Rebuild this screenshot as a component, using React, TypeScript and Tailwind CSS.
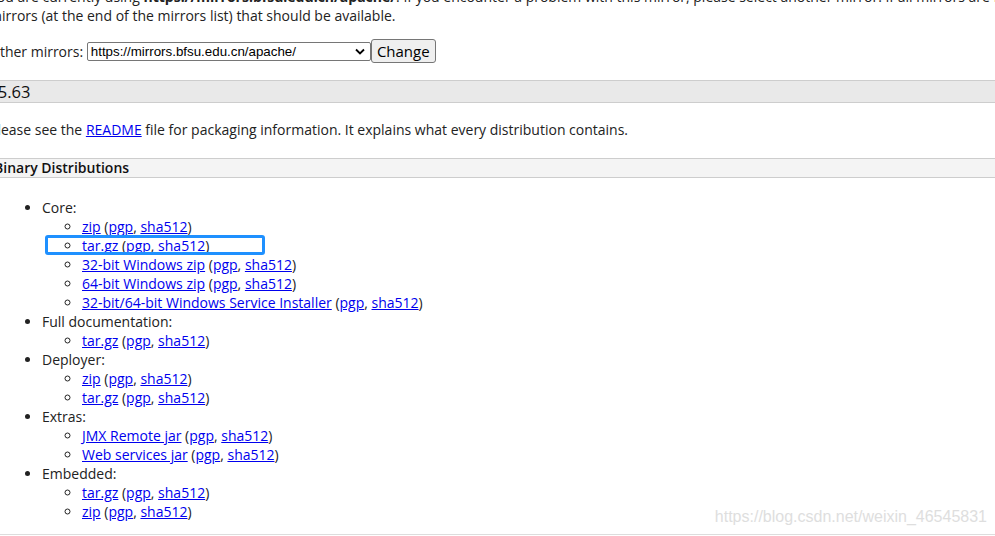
import React from "react";

const L = "text-[#0000ee] underline";

function Item({ name }: { name: string }) {
  return (
    <li>
      <a className={L} href="#">{name}</a> (<a className={L} href="#">pgp</a>, <a className={L} href="#">sha512</a>)
    </li>
  );
}

export default function App() {
  return (
    <div
      className="relative h-[536px] w-[995px] overflow-hidden bg-white text-[14px] leading-[19px] text-[#222]"
      style={{ fontFamily: '"Open Sans", sans-serif' }}
    >
      <div className="-ml-[16px] -mt-[13px] w-[1100px]">
        <div className="pl-[5px]">
          <div className="whitespace-nowrap">
            You are currently using <b>https://mirrors.bfsu.edu.cn/apache/</b>. If you encounter a problem with this mirror, please select another mirror. If all mirrors are failing, there are <i>backup</i>
          </div>
          <div className="whitespace-nowrap">mirrors (at the end of the mirrors list) that should be available.</div>
        </div>

        <div className="mt-[14px] flex h-[24px] items-center pl-[5px]">
          <span className="whitespace-pre">Other mirrors: </span>
          <div
            className="flex h-[19px] w-[284px] items-center justify-between rounded-[2px] border border-[#767676] bg-white pl-[3px] pr-[5px] text-[13.33px] text-black"
            style={{ fontFamily: '"Liberation Sans", Arial, sans-serif' }}
          >
            <span>https://mirrors.bfsu.edu.cn/apache/</span>
            <svg width="10" height="7" viewBox="0 0 10 7" fill="none">
              <path d="M1 1.5 L5 5.5 L9 1.5" stroke="#000" strokeWidth="1.8" />
            </svg>
          </div>
          <div className="flex h-[24px] w-[65px] items-center justify-center rounded-[3px] border border-[#767676] bg-[#efefef] text-[15px] text-black">
            Change
          </div>
        </div>

        <h3 className="mt-[17px] h-[23px] border-y border-[#cdcdcd] bg-[#e9e9e9] pl-[0px] text-[16.5px] font-normal leading-[21px] text-[#111]">
          8.5.63
        </h3>

        <p className="mt-[17px] pl-[5px]">
          Please see the <a className={L} href="#">README</a> file for packaging information. It explains what every distribution contains.
        </p>

        <h4 className="mt-[19px] h-[20px] border-y border-[#cdcdcd] bg-[#f4f4f4] pl-[10px] text-[14px] font-semibold leading-[18px] text-[#111]">
          Binary Distributions
        </h4>

        <ul className="mt-[20px] list-disc pl-[58px]">
          <li>
            Core:
            <ul className="list-[circle] pl-[40px]">
              <Item name="zip" />
              <Item name="tar.gz" />
              <Item name="32-bit Windows zip" />
              <Item name="64-bit Windows zip" />
              <Item name="32-bit/64-bit Windows Service Installer" />
            </ul>
          </li>
          <li>
            Full documentation:
            <ul className="list-[circle] pl-[40px]">
              <Item name="tar.gz" />
            </ul>
          </li>
          <li>
            Deployer:
            <ul className="list-[circle] pl-[40px]">
              <Item name="zip" />
              <Item name="tar.gz" />
            </ul>
          </li>
          <li>
            Extras:
            <ul className="list-[circle] pl-[40px]">
              <Item name="JMX Remote jar" />
              <Item name="Web services jar" />
            </ul>
          </li>
          <li>
            Embedded:
            <ul className="list-[circle] pl-[40px]">
              <Item name="tar.gz" />
              <Item name="zip" />
            </ul>
          </li>
        </ul>

        <div className="mt-[13px] h-px bg-[#dddddd]" />
      </div>

      <div className="absolute left-[45px] top-[235px] h-[20px] w-[220px] rounded-[3px] border-[3px] border-[#1e90ff]" />

      <div
        className="absolute right-[8px] top-[507px] text-[16px] leading-[20px] text-[#dedede]"
        style={{ fontFamily: '"Liberation Sans", Arial, sans-serif' }}
      >
        https://blog.csdn.net/weixin_46545831
      </div>
    </div>
  );
}
